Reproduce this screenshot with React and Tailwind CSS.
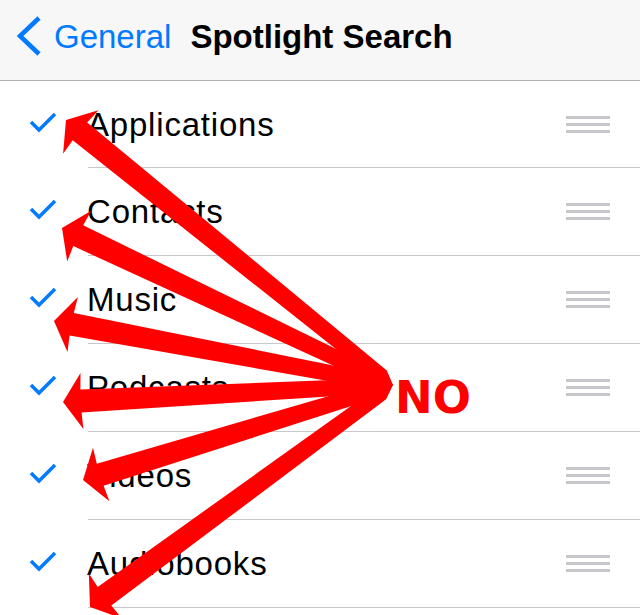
import React from 'react';

const ITEMS = ['Applications', 'Contacts', 'Music', 'Podcasts', 'Videos', 'Audiobooks'];

// Arrow tips, all arrows start from the same tail point
const TAIL = [393, 385];
const TIPS = [
  [66, 120],
  [62, 228],
  [54, 321],
  [63, 402],
  [83, 480],
  [90, 607],
];

// Skitch-like arrow: triangle head + slightly tapered shaft with a pointed tail
const arrowPoints = ([tx, ty]) => {
  const [ox, oy] = TAIL;
  const len = Math.hypot(tx - ox, ty - oy);
  const ux = (tx - ox) / len;
  const uy = (ty - oy) / len;
  const nx = -uy;
  const ny = ux;
  const headLen = 19;
  const headHalf = 28;
  const shaftHead = 11.5;
  const shaftTail = 7.5;
  const bx = tx - ux * headLen;
  const by = ty - uy * headLen;
  const jx = tx - ux * (headLen - 1);
  const jy = ty - uy * (headLen - 1);
  const sx = ox + ux * 14;
  const sy = oy + uy * 14;
  const pts = [
    [tx, ty],
    [bx + nx * headHalf, by + ny * headHalf],
    [jx + nx * shaftHead, jy + ny * shaftHead],
    [sx + nx * shaftTail, sy + ny * shaftTail],
    [ox, oy],
    [sx - nx * shaftTail, sy - ny * shaftTail],
    [jx - nx * shaftHead, jy - ny * shaftHead],
    [bx - nx * headHalf, by - ny * headHalf],
  ];
  return pts.map(p => p.map(v => v.toFixed(1)).join(',')).join(' ');
};

const Check = () => (
  <svg width="28" height="20" viewBox="0 0 28 20" className="ml-[29px] mb-[4px]">
    <polyline points="2,9 10,17 26,1" fill="none" stroke="#007aff" strokeWidth="3.5" strokeLinejoin="miter" />
  </svg>
);

const Handle = () => (
  <div className="w-[44px] mr-[30px] flex flex-col gap-[4px]">
    <div className="h-[3px] bg-[#c7c7cc]" />
    <div className="h-[3px] bg-[#c7c7cc]" />
    <div className="h-[3px] bg-[#c7c7cc]" />
  </div>
);

export default function App() {
  return (
    <div className="relative w-[640px] h-[615px] overflow-hidden bg-white font-['Liberation_Sans',Arial,sans-serif]">
      {/* Nav bar */}
      <header className="h-[81px] bg-[#f7f7f8] border-b border-[#b2b2b2] flex items-center pb-[8px] pl-[14px]">
        <svg width="30" height="44" viewBox="0 0 30 44">
          <polyline points="25,4 6,22 25,40" fill="none" stroke="#007aff" strokeWidth="4.5" strokeLinejoin="miter" />
        </svg>
        <span className="ml-[10px] text-[33px] leading-none text-[#007aff]">General</span>
        <span className="ml-[19px] text-[33px] leading-none font-bold text-black">Spotlight Search</span>
      </header>

      {/* List */}
      <div>
        {ITEMS.map((item, idx) => (
          <div key={item} className={`flex ${idx === 0 ? 'h-[87px]' : 'h-[88px]'}`}>
            <div className="w-[88px] flex items-center">
              <Check />
            </div>
            <div className="flex-1 flex items-center justify-between border-b border-[#c8c7cc]">
              <span className="-ml-[1px] text-[33px] leading-none tracking-[0.8px] text-black">{item}</span>
              <Handle />
            </div>
          </div>
        ))}
      </div>

      {/* Annotation overlay */}
      <svg className="absolute inset-0 pointer-events-none" width="640" height="615" viewBox="0 0 640 615">
        {TIPS.map((tip, i) => (
          <polygon key={i} points={arrowPoints(tip)} fill="#ff0000" />
        ))}
      </svg>
      <div className="absolute left-[395px] top-[375px] text-[45px] leading-none font-bold text-[#ff0000] font-['DejaVu_Sans',sans-serif]">
        NO
      </div>
    </div>
  );
}
